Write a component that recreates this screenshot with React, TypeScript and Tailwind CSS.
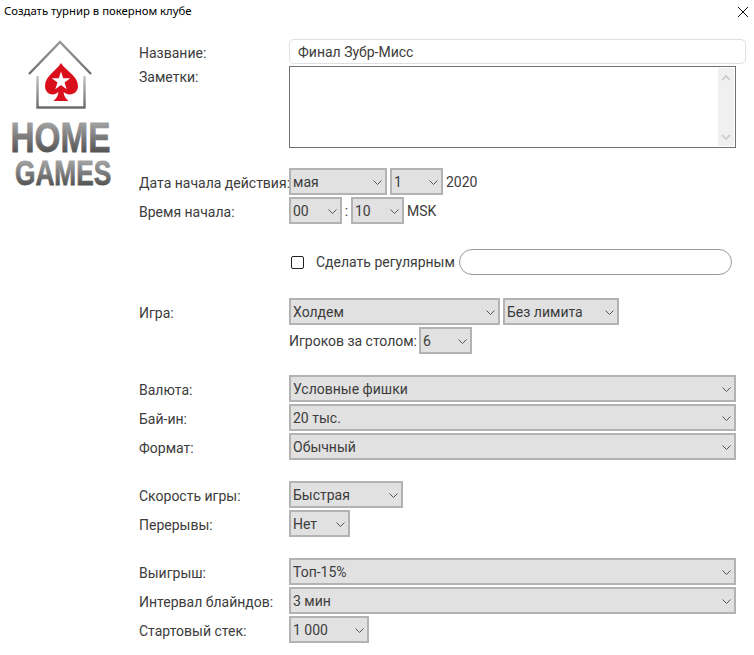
import React from "react";

const font = "font-['Roboto',sans-serif]";

function Chevron() {
    return (
        <svg className="absolute right-[5px] top-[12px] w-[9px] h-[5px] pointer-events-none" viewBox="0 0 9 5" fill="none" stroke="#555" strokeWidth={1}>
            <path d="M.5.5l4 4 4-4" />
        </svg>
    );
}

function Select({ value, width }: { value: string; width: string }) {
    return (
        <div className={`relative shrink-0 h-[27px] ${width}`}>
            <select
                defaultValue={value}
                className={`appearance-none w-full h-full bg-[#e1e1e1] border-2 border-[#b3b3b3] pl-[2px] pt-[1px] text-[14px] text-[#3c3c3c] outline-none ${font}`}
            >
                <option>{value}</option>
            </select>
            <Chevron />
        </div>
    );
}

function Row({ label, children, className = "h-[27px]" }: { label?: string; children: React.ReactNode; className?: string }) {
    return (
        <div className={`flex items-center ${className}`}>
            <div className="w-[150px] shrink-0 whitespace-nowrap pt-[3px] text-[14px] text-[#3c3c3c]">{label}</div>
            {children}
        </div>
    );
}

function Logo() {
    return (
        <svg className="w-[139px] h-[170px] shrink-0" viewBox="0 0 139 170">
            <defs>
                <linearGradient id="roof" x1="0" y1="0" x2="0" y2="1">
                    <stop offset="0" stopColor="#9a9a9a" />
                    <stop offset="1" stopColor="#6f6f6f" />
                </linearGradient>
                <linearGradient id="walls" x1="0" y1="0" x2="0" y2="1">
                    <stop offset="0" stopColor="#c4c4c4" />
                    <stop offset="1" stopColor="#6a6a6a" />
                </linearGradient>
                {/* gradients sit in the text's own transformed space, baseline at y=0 */}
                <linearGradient id="home" gradientUnits="userSpaceOnUse" x1="0" y1="-31" x2="0" y2="0">
                    <stop offset="0" stopColor="#a6a6a6" />
                    <stop offset="1" stopColor="#555" />
                </linearGradient>
                <linearGradient id="games" gradientUnits="userSpaceOnUse" x1="0" y1="-25" x2="0" y2="0">
                    <stop offset="0" stopColor="#a6a6a6" />
                    <stop offset="1" stopColor="#555" />
                </linearGradient>
            </defs>
            <path d="M29 44L60 12L91 44" fill="none" stroke="url(#roof)" strokeWidth={2.4} />
            <path d="M37.500 46V77.500H84.500V46" fill="none" stroke="url(#walls)" strokeWidth={2.4} />
            {/* spade */}
            <path
                d="M61 33C66 41 78 46 78 56C78 64 69 67 63.500 62C64 66 65.500 68 68.500 71H53.500C56.500 68 58 66 58.500 62C53 67 45 64 45 56C45 46 56 41 61 33Z"
                fill="#d9101c"
            />
            <path d="M61 41.500L63.200 48.300H70.300L64.500 52.500L66.700 59.300L61 55.100L55.300 59.300L57.500 52.500L51.700 48.300H58.800Z" fill="#fff" />
            <text transform="translate(10.500 122) scale(.775 1)" fontFamily="'Liberation Sans', sans-serif" fontWeight="700" fontSize="43" fill="url(#home)" stroke="url(#home)" strokeWidth={0.8}>HOME</text>
            <text transform="translate(15 155) scale(.75 1)" fontFamily="'Liberation Sans', sans-serif" fontWeight="700" fontSize="35" fill="url(#games)" stroke="url(#games)" strokeWidth={0.8}>GAMES</text>
        </svg>
    );
}

export default function App() {
    return (
        <div className={`relative w-[754px] h-[655px] bg-white overflow-hidden text-[#3c3c3c] ${font}`}>
            {/* Window title */}
            <div className="h-[30px] pl-[4px] pt-[3px] text-[11.35px] leading-[16px] text-black font-['Noto_Sans',sans-serif]">
                Создать турнир в покерном клубе
            </div>
            <button className="absolute top-[5px] right-[4px] w-[14px] h-[14px]">
                <svg viewBox="0 0 14 14" fill="none" stroke="#111" strokeWidth={1}>
                    <path d="M2 2l10 10M12 2L2 12" />
                </svg>
            </button>

            <div className="flex">
                <Logo />
                <div className="flex-1 pt-[9px]">
                    <Row label="Название:" className="h-[25px]">
                        <input
                            defaultValue="Финал Зубр-Мисс"
                            className="w-[457px] h-[25px] rounded-[5px] border border-[#e0e0e0] pl-[8px] text-[14px] text-[#3c3c3c] outline-none"
                        />
                    </Row>
                    <div className="flex mt-[2px]">
                        <div className="w-[150px] shrink-0 pt-[1px] text-[14px] leading-[20px]">Заметки:</div>
                        <div className="relative w-[447px] h-[82px] border border-[#707070] bg-white">
                            <div className="absolute top-[1px] right-[1px] bottom-[1px] w-[16px] bg-[#f0f0f0]">
                                <svg className="absolute top-[7px] left-[3px] w-[10px] h-[6px]" viewBox="0 0 10 6" fill="none" stroke="#c8c8c8" strokeWidth={1.6}>
                                    <path d="M1 5l4-4 4 4" />
                                </svg>
                                <svg className="absolute bottom-[6px] left-[3px] w-[10px] h-[6px]" viewBox="0 0 10 6" fill="none" stroke="#c8c8c8" strokeWidth={1.6}>
                                    <path d="M1 1l4 4 4-4" />
                                </svg>
                            </div>
                        </div>
                    </div>

                    <Row label="Дата начала действия:" className="h-[27px] mt-[20px]">
                        <Select value="мая" width="w-[98px]" />
                        <div className="w-[3px]" />
                        <Select value="1" width="w-[53px]" />
                        <span className="ml-[3px] pt-[2px] text-[14px]">2020</span>
                    </Row>
                    <Row label="Время начала:" className="h-[27px] mt-[2px]">
                        <Select value="00" width="w-[53px]" />
                        <span className="w-[9px] pt-[2px] text-center text-[14px]">:</span>
                        <Select value="10" width="w-[53px]" />
                        <span className="ml-[3px] pt-[2px] text-[14px]">MSK</span>
                    </Row>

                    <div className="flex items-center h-[27px] mt-[25px] pl-[150px]">
                        <div className="w-[13px] h-[13px] ml-[2px] rounded-[2px] border-[1.5px] border-[#222] shrink-0" />
                        <span className="ml-[12px] text-[14px] whitespace-nowrap">Сделать регулярным</span>
                        <div className="ml-[4px] self-start w-[273px] h-[26px] rounded-full border border-[#999] bg-white" />
                    </div>

                    <Row label="Игра:" className="h-[27px] mt-[22px]">
                        <Select value="Холдем" width="w-[211px]" />
                        <div className="w-[3px]" />
                        <Select value="Без лимита" width="w-[116px]" />
                    </Row>
                    <div className="flex items-center h-[27px] mt-[2px] pl-[150px]">
                        <span className="w-[130px] pt-[2px] text-[14px] tracking-[-0.02px] whitespace-nowrap">Игроков за столом:</span>
                        <Select value="6" width="w-[53px]" />
                    </div>

                    <Row label="Валюта:" className="h-[27px] mt-[21px]">
                        <Select value="Условные фишки" width="w-[447px]" />
                    </Row>
                    <Row label="Бай-ин:" className="h-[27px] mt-[2px]">
                        <Select value="20 тыс." width="w-[447px]" />
                    </Row>
                    <Row label="Формат:" className="h-[27px] mt-[2px]">
                        <Select value="Обычный" width="w-[447px]" />
                    </Row>

                    <Row label="Скорость игры:" className="h-[27px] mt-[21px]">
                        <Select value="Быстрая" width="w-[114px]" />
                    </Row>
                    <Row label="Перерывы:" className="h-[27px] mt-[2px]">
                        <Select value="Нет" width="w-[61px]" />
                    </Row>

                    <Row label="Выигрыш:" className="h-[27px] mt-[21px]">
                        <Select value="Топ-15%" width="w-[447px]" />
                    </Row>
                    <Row label="Интервал блайндов:" className="h-[27px] mt-[2px]">
                        <Select value="3 мин" width="w-[447px]" />
                    </Row>
                    <Row label="Стартовый стек:" className="h-[27px] mt-[2px]">
                        <Select value="1 000" width="w-[80px]" />
                    </Row>
                </div>
            </div>
        </div>
    );
}
